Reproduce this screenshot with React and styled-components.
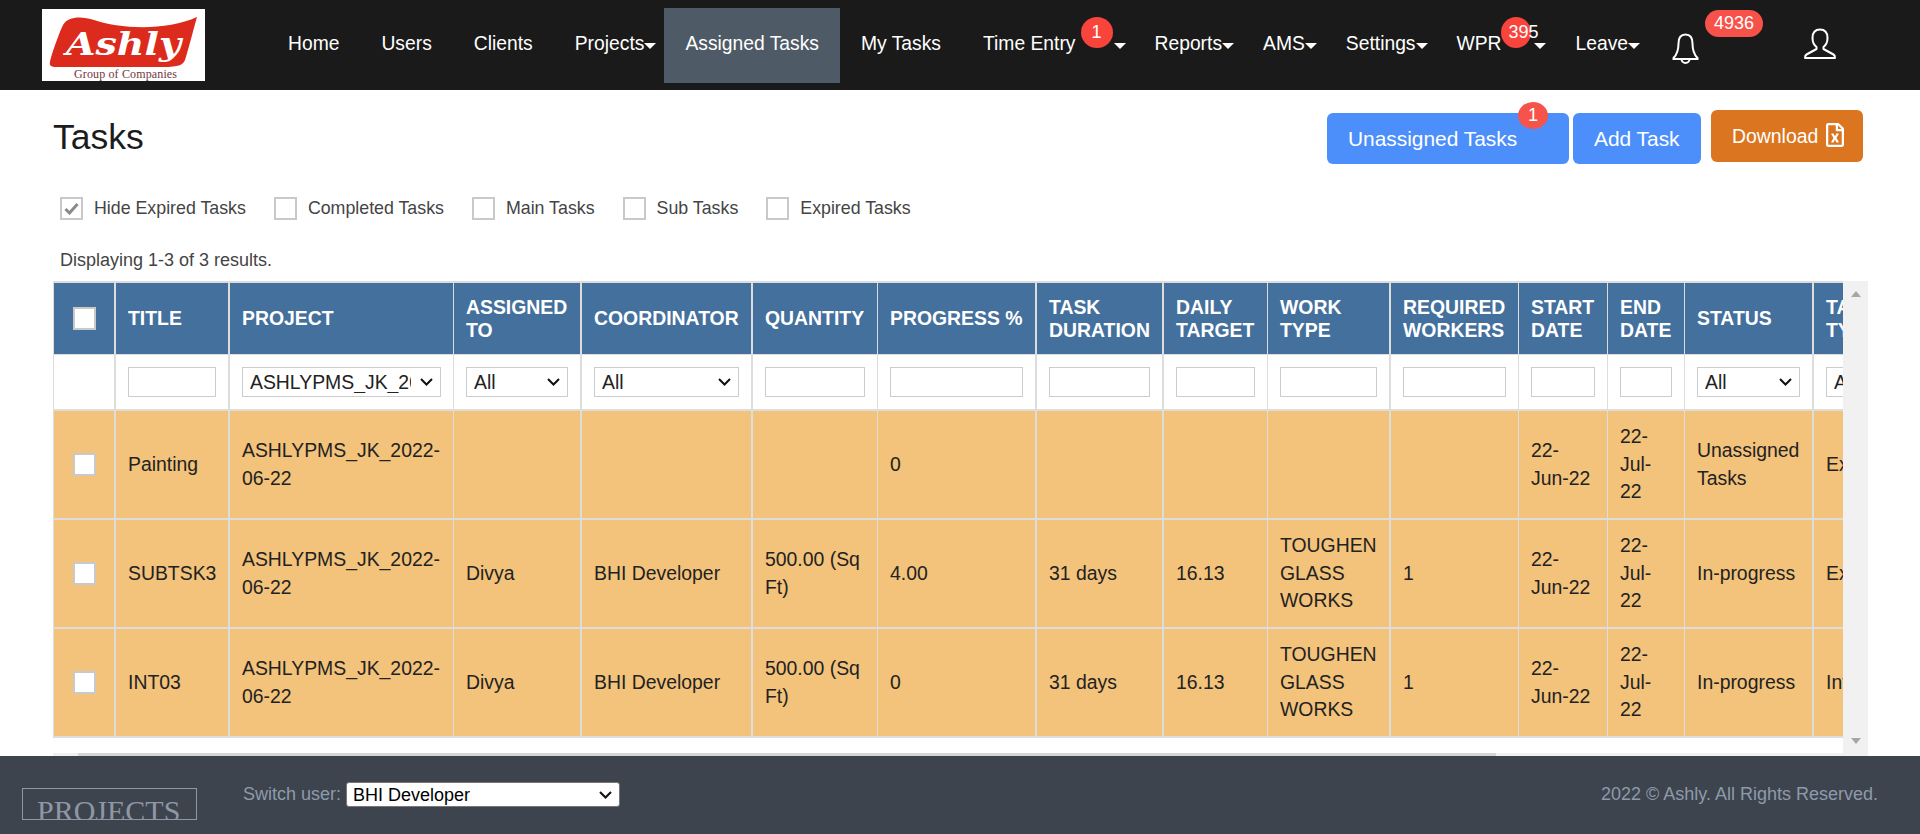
import React from "react";
import styled, { createGlobalStyle } from "styled-components";
import { FaRegFileExcel } from "react-icons/fa";

const CHEVRON =
  "url(\"data:image/svg+xml;utf8,<svg xmlns='http://www.w3.org/2000/svg' width='13' height='8' viewBox='0 0 13 8'><path d='M1 1 L6.5 6.5 L12 1' fill='none' stroke='%23111' stroke-width='2'/></svg>\")";

const Global = createGlobalStyle`
  html, body { margin: 0; padding: 0; height: 100%; overflow: hidden; background: #fff; }
  body { font-family: "Liberation Sans", Arial, sans-serif; color: #222; }
  * { box-sizing: border-box; }
`;

const Page = styled.div`
  height: 100vh;
  overflow: hidden;
`;

const TopBar = styled.header`
  height: 90px;
  background: #1a1a1a;
  display: flex;
  align-items: flex-start;
  padding: 8px 0 0 42px;
`;

const LogoBox = styled.svg`
  width: 163px;
  height: 72px;
  margin-top: 1px;
  background: #fff;
  flex: none;
`;

const NavList = styled.nav`
  display: flex;
  align-items: flex-start;
  margin-left: 62px;
`;

const NavItem = styled.a`
  display: flex;
  align-items: flex-start;
  height: 75px;
  padding: 22px ${(p) => (p.$caret ? "8px" : "21px")} 0 21px;
  font-size: 19.3px;
  line-height: 27.4px;
  color: #fff;
  background: ${(p) => (p.$active ? "#4e5a66" : "transparent")};
  white-space: nowrap;
`;

const Caret = styled.i`
  flex: none;
  width: 0;
  height: 0;
  margin-top: 13px;
  border-left: 6px solid transparent;
  border-right: 6px solid transparent;
  border-top: 6px solid #fff;
`;

const NavBadge = styled.span`
  flex: none;
  width: ${(p) => (p.$wide ? "30px" : "32px")};
  height: 31px;
  margin: -13px ${(p) => (p.$wide ? "3px" : "1px")} 0 ${(p) => (p.$wide ? "0" : "5px")};
  background: #f9443c;
  border-radius: 50%;
  color: #fff;
  font-size: 18px;
  line-height: 31px;
  text-align: ${(p) => (p.$wide ? "left" : "center")};
  padding-left: ${(p) => (p.$wide ? "7px" : "0")};
`;

const BellIcon = styled.svg`
  width: 27px;
  height: 31px;
  margin: 25px 0 0 24px;
  flex: none;
`;

const CountBadge = styled.span`
  flex: none;
  width: 58px;
  height: 27px;
  margin: 2px 0 0 6px;
  background: #f7524a;
  border-radius: 14px;
  color: #fff;
  font-size: 18px;
  line-height: 27px;
  text-align: center;
`;

const UserIcon = styled.svg`
  width: 32px;
  height: 31px;
  margin: 20px 0 0 41px;
  flex: none;
`;

const Main = styled.main`
  padding: 0 52px 0 53px;
`;

const TitleRow = styled.div`
  height: 107px;
  display: flex;
  justify-content: space-between;
  align-items: flex-start;
  padding: 20px 5px 0 0;
`;

const Title = styled.h1`
  margin: 8px 0 0;
  font-size: 35.5px;
  line-height: 38px;
  font-weight: 400;
  color: #1c1c1c;
`;

const Actions = styled.div`
  display: flex;
  align-items: flex-start;
`;

const BlueButton = styled.button`
  position: relative;
  height: 51px;
  margin: 3px 4px 0 0;
  padding: 0 21px;
  width: ${(p) => p.$w}px;
  border: 0;
  border-radius: 6px;
  background: #4c8ffb;
  color: #fff;
  font: 400 20.9px "Liberation Sans", Arial, sans-serif;
  text-align: left;
`;

const ButtonBadge = styled.span`
  position: absolute;
  top: -11px;
  right: 21px;
  width: 30px;
  height: 27px;
  border-radius: 50%;
  background: #f6534b;
  color: #fff;
  font-size: 18px;
  line-height: 27px;
  text-align: center;
`;

const DownloadButton = styled.button`
  display: flex;
  align-items: center;
  gap: 5px;
  height: 52px;
  width: 152px;
  margin-left: 6px;
  padding: 0 21px;
  border: 0;
  border-radius: 6px;
  background: #dc7520;
  color: #fff;
  font: 400 19.4px "Liberation Sans", Arial, sans-serif;
  white-space: nowrap;
  svg { font-size: 24px; margin-top: -2px; flex: none; }
`;

const Filters = styled.div`
  display: flex;
  align-items: center;
  gap: 28px;
  height: 23px;
  padding-left: 7px;
`;

const FilterLabel = styled.label`
  display: flex;
  align-items: center;
  gap: 11px;
  font-size: 17.8px;
  color: #444;
`;

const Box = styled.span`
  display: ${(p) => (p.$block ? "block" : "flex")};
  align-items: center;
  justify-content: center;
  flex: none;
  width: 23px;
  height: 23px;
  margin: ${(p) => (p.$block ? "0 auto" : "0")};
  background: #fff;
  border: 2px solid #c9c9c9;
`;

const Results = styled.p`
  margin: 27px 0 0 7px;
  font-size: 18px;
  line-height: 26px;
  color: #444;
`;

const TableArea = styled.section`
  display: flex;
  margin-top: 8px;
  height: 475px;
`;

const TableColumn = styled.div`
  width: 1790px;
  flex: none;
  display: flex;
  flex-direction: column;
`;

const Viewport = styled.div`
  height: 472px;
  overflow: hidden;
`;

const HTrack = styled.div`
  height: 3px;
  background: #f1f1f1;
  padding-left: 25px;
`;

const HThumb = styled.div`
  width: 1418px;
  height: 100%;
  background: #d6d6d6;
`;

const VBar = styled.div`
  width: 25px;
  flex: none;
  background: #f1f1f1;
  display: flex;
  flex-direction: column;
  align-items: center;
  justify-content: space-between;
  padding-top: 10px;
`;

const ArrowUp = styled.i`
  width: 0;
  height: 0;
  border-left: 5px solid transparent;
  border-right: 5px solid transparent;
  border-bottom: 6px solid #a6a6a6;
`;

const ArrowDown = styled.i`
  width: 0;
  height: 0;
  margin-bottom: 12px;
  border-left: 5px solid transparent;
  border-right: 5px solid transparent;
  border-top: 6px solid #a6a6a6;
`;

const THIN = [1, 4, 7, 10, 12, 13, 14];

const Table = styled.table`
  table-layout: fixed;
  width: 1877px;
  border-collapse: separate;
  border-spacing: 0;
  border-top: 2px solid #ddd;
  border-bottom: 2px solid #ddd;
  font-size: 19.4px;

  th, td {
    border-left: 2px solid #ddd;
    padding: 0 12px;
    vertical-align: middle;
  }
  ${THIN.map(
    (n) => `th:nth-child(${n}), td:nth-child(${n}) { border-left-width: 1px; }`
  ).join("\n")}
`;

const Col = styled.col`
  width: ${(p) => p.$w}px;
`;

const HeadCell = styled.th`
  height: 71px;
  background: #44709d;
  color: #fff;
  font-size: 19.4px;
  line-height: 22.4px;
  font-weight: 700;
  text-align: left;
`;

const FilterCell = styled.td`
  && {
    height: 55px;
    padding-top: 12px;
    padding-bottom: 12px;
    border-top: 1px solid #ddd;
  }
  background: #fff;
`;

const TextInput = styled.input`
  display: block;
  width: 100%;
  height: 30px;
  padding: 0 6px;
  border: 1px solid #ccc;
  border-radius: 0;
  background: #fff;
`;

const SelectInput = styled.select`
  display: block;
  width: 100%;
  height: 30px;
  padding: 0 29px 0 7px;
  border: 1px solid #ccc;
  border-radius: 0;
  appearance: none;
  background: #fff ${CHEVRON} no-repeat right 7px center;
  color: #222;
  font: 400 19.4px "Liberation Sans", Arial, sans-serif;
`;

const DataCell = styled.td`
  && { border-top: 2px solid #ddd; }
  height: 109px;
  background: #f3c27b;
  color: #222;
  line-height: 27.4px;
`;

const Footer = styled.footer`
  position: fixed;
  left: 0;
  right: 0;
  bottom: 0;
  height: 78px;
  background: #3d444d;
  color: #8e9aab;
  display: flex;
  align-items: flex-start;
  padding: 0 42px 0 22px;
`;

const FooterBrand = styled.div`
  width: 175px;
  height: 32px;
  margin-top: 32px;
  border: 1px solid #8e97a5;
  overflow: hidden;
  padding-left: 14px;
  font-family: "Liberation Serif", "Times New Roman", serif;
  font-size: 30px;
  line-height: 44px;
  color: #8e97a5;
  white-space: nowrap;
`;

const SwitchUser = styled.div`
  display: flex;
  align-items: center;
  gap: 5px;
  height: 25px;
  margin: 26px 0 0 46px;
  font-size: 18px;
`;

const UserSelect = styled.select`
  width: 274px;
  height: 25px;
  padding: 0 29px 0 6px;
  border: 1px solid #777;
  border-radius: 3px;
  appearance: none;
  background: #fff ${CHEVRON} no-repeat right 7px center;
  color: #000;
  font: 400 18px "Liberation Sans", Arial, sans-serif;
`;

const Copyright = styled.div`
  margin: 26px 0 0 auto;
  font-size: 18px;
  line-height: 25px;
`;

const Check = () => (
  <svg width="15" height="13" viewBox="0 0 15 13">
    <path d="M1.5 7 L5.5 11 L13.5 2" fill="none" stroke="#8a8a8a" strokeWidth="3" />
  </svg>
);

const COLS = [61, 114, 225, 127, 171, 126, 158, 127, 105, 122, 129, 89, 77, 128, 118];

const HEADS = [
  null, "TITLE", "PROJECT", "ASSIGNED TO", "COORDINATOR", "QUANTITY", "PROGRESS %",
  "TASK DURATION", "DAILY TARGET", "WORK TYPE", "REQUIRED WORKERS", "START DATE",
  "END DATE", "STATUS", "TASK TYPE",
];

const FILTERS = [
  null, "text", ["ASHLYPMS_JK_2022-06-22"], ["All"], ["All"], "text", "text", "text",
  "text", "text", "text", "text", "text", ["All"], ["All"],
];

const ROWS = [
  ["Painting", "ASHLYPMS_JK_2022-06-22", "", "", "", "0", "", "", "", "", "22-Jun-22", "22-Jul-22", "Unassigned Tasks", "External"],
  ["SUBTSK3", "ASHLYPMS_JK_2022-06-22", "Divya", "BHI Developer", "500.00 (Sq Ft)", "4.00", "31 days", "16.13", "TOUGHEN GLASS WORKS", "1", "22-Jun-22", "22-Jul-22", "In-progress", "External"],
  ["INT03", "ASHLYPMS_JK_2022-06-22", "Divya", "BHI Developer", "500.00 (Sq Ft)", "0", "31 days", "16.13", "TOUGHEN GLASS WORKS", "1", "22-Jun-22", "22-Jul-22", "In-progress", "Internal"],
];

const NAV = [
  { label: "Home" },
  { label: "Users" },
  { label: "Clients" },
  { label: "Projects", caret: true },
  { label: "Assigned Tasks", active: true },
  { label: "My Tasks" },
  { label: "Time Entry", caret: true, badge: "1" },
  { label: "Reports", caret: true },
  { label: "AMS", caret: true },
  { label: "Settings", caret: true },
  { label: "WPR", caret: true, badge: "395", wide: true },
  { label: "Leave", caret: true },
];

const CHECKS = [
  { label: "Hide Expired Tasks", on: true },
  { label: "Completed Tasks" },
  { label: "Main Tasks" },
  { label: "Sub Tasks" },
  { label: "Expired Tasks" },
];

export default function App() {
  return (
    <Page>
      <Global />
      <TopBar>
        <LogoBox viewBox="0 0 163 72">
          <path
            d="M8 53 C9 47 17 24 21 16 C26 7 40 7 52 11 C78 20 125 22 155 8 C151 22 147 38 143 51 C141 56 136 58 122 58 L14 58 C9 58 7 56 8 53 Z"
            fill="#dc2a1c"
          />
          <text x="24" y="46" fontFamily="DejaVu Serif" fontStyle="italic" fontWeight="700" fontSize="31" fill="#fff" textLength="115" lengthAdjust="spacingAndGlyphs">Ashly</text>
          <text x="32" y="69" fontFamily="Liberation Serif" fontSize="12" fill="#74363c" textLength="103">Group of Companies</text>
        </LogoBox>
        <NavList>
          {NAV.map((n) => (
            <NavItem key={n.label} $caret={n.caret} $active={n.active}>
              {n.label}
              {n.badge && <NavBadge $wide={n.wide}>{n.badge}</NavBadge>}
              {n.caret && <Caret />}
            </NavItem>
          ))}
        </NavList>
        <BellIcon viewBox="0 0 27 31" fill="none" stroke="#fff" strokeWidth="2">
          <path d="M13.5 1.5 C8.5 1.5 6.5 5.5 6.5 10.5 C6.5 17 5.5 21 1.5 25 L1.5 26 H25.5 V25 C21.5 21 20.5 17 20.5 10.5 C20.5 5.5 18.5 1.5 13.5 1.5 Z" />
          <path d="M9.5 26 a4 4 0 0 0 8 0" />
        </BellIcon>
        <CountBadge>4936</CountBadge>
        <UserIcon viewBox="0 0 32 31" fill="none" stroke="#fff" strokeWidth="2" strokeLinejoin="round">
          <path d="M16 1.5 C10.5 1.5 8.5 5.5 8.5 10 C8.5 14 10 17 12.5 19 V21 L2.5 26.5 C1.5 27 1 28.5 1 30 H31 C31 28.5 30.5 27 29.5 26.5 L19.5 21 V19 C22 17 23.5 14 23.5 10 C23.5 5.5 21.5 1.5 16 1.5 Z" />
        </UserIcon>
      </TopBar>

      <Main>
        <TitleRow>
          <Title>Tasks</Title>
          <Actions>
            <BlueButton $w={242}>
              Unassigned Tasks
              <ButtonBadge>1</ButtonBadge>
            </BlueButton>
            <BlueButton $w={128}>Add Task</BlueButton>
            <DownloadButton>
              Download
              <FaRegFileExcel />
            </DownloadButton>
          </Actions>
        </TitleRow>

        <Filters>
          {CHECKS.map((c) => (
            <FilterLabel key={c.label}>
              <Box>{c.on && <Check />}</Box>
              {c.label}
            </FilterLabel>
          ))}
        </Filters>

        <Results>Displaying 1-3 of 3 results.</Results>

        <TableArea>
          <TableColumn>
            <Viewport>
              <Table>
                <colgroup>
                  {COLS.map((w, i) => (
                    <Col key={i} $w={w} />
                  ))}
                </colgroup>
                <thead>
                  <tr>
                    {HEADS.map((h, i) => (
                      <HeadCell key={i}>{h ?? <Box $block />}</HeadCell>
                    ))}
                  </tr>
                  <tr>
                    {FILTERS.map((f, i) => (
                      <FilterCell key={i}>
                        {f === "text" && <TextInput type="text" />}
                        {Array.isArray(f) && (
                          <SelectInput defaultValue={f[0]}>
                            <option>{f[0]}</option>
                          </SelectInput>
                        )}
                      </FilterCell>
                    ))}
                  </tr>
                </thead>
                <tbody>
                  {ROWS.map((r) => (
                    <tr key={r[0]}>
                      <DataCell>
                        <Box $block />
                      </DataCell>
                      {r.map((v, i) => (
                        <DataCell key={i}>{v}</DataCell>
                      ))}
                    </tr>
                  ))}
                </tbody>
              </Table>
            </Viewport>
            <HTrack>
              <HThumb />
            </HTrack>
          </TableColumn>
          <VBar>
            <ArrowUp />
            <ArrowDown />
          </VBar>
        </TableArea>
      </Main>

      <Footer>
        <FooterBrand>PROJECTS</FooterBrand>
        <SwitchUser>
          Switch user:
          <UserSelect defaultValue="BHI Developer">
            <option>BHI Developer</option>
          </UserSelect>
        </SwitchUser>
        <Copyright>2022 © Ashly. All Rights Reserved.</Copyright>
      </Footer>
    </Page>
  );
}
